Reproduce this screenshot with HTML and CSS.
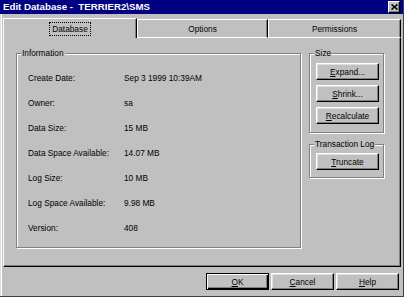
FILE: index.html
```html
<!DOCTYPE html>
<html>
<head>
<meta charset="utf-8">
<link rel="stylesheet" href="styles.css">
</head>
<body>
<div class="window">
  <div class="titlebar">
    <span class="title">Edit Database -  TERRIER2\SMS</span>
    <span class="close"><svg width="7" height="6" viewBox="0 0 7 6"><path d="M0.5 0.5 L6.5 5.5 M6.5 0.5 L0.5 5.5" stroke="#000" stroke-width="1.6" fill="none"/></svg></span>
  </div>
  <div class="main">
    <div class="tabs">
      <div class="tab tab1 active"><span class="focus">Database</span></div>
      <div class="tab tab2">Options</div>
      <div class="tab tab3">Permissions</div>
    </div>
    <div class="panel">
      <fieldset class="group info">
        <legend>Information</legend>
        <div class="grid">
          <span>Create Date:</span><span>Sep 3 1999 10:39AM</span>
          <span>Owner:</span><span>sa</span>
          <span>Data Size:</span><span>15 MB</span>
          <span>Data Space Available:</span><span>14.07 MB</span>
          <span>Log Size:</span><span>10 MB</span>
          <span>Log Space Available:</span><span>9.98 MB</span>
          <span>Version:</span><span>408</span>
        </div>
      </fieldset>
      <div class="side">
        <fieldset class="group size">
          <legend>Size</legend>
          <div class="btns">
            <button class="btn"><span><u>E</u>xpand...</span></button>
            <button class="btn"><span><u>S</u>hrink...</span></button>
            <button class="btn"><span><u>R</u>ecalculate</span></button>
          </div>
        </fieldset>
        <fieldset class="group tlog">
          <legend>Transaction Log</legend>
          <div class="btns tl">
            <button class="btn"><span><u>T</u>runcate</span></button>
          </div>
        </fieldset>
      </div>
    </div>
    <div class="footer">
      <button class="btn default"><span><u>O</u>K</span></button>
      <button class="btn"><span><u>C</u>ancel</span></button>
      <button class="btn"><span><u>H</u>elp</span></button>
    </div>
  </div>
</div>
</body>
</html>
```
FILE: styles.css
```css
* { box-sizing: border-box; }
html, body { margin: 0; padding: 0; background: #c0c0c0; }
body { font-family: "Liberation Sans", Arial, sans-serif; font-size: 8.3px; color: #000; }

.window {
  width: 404px; height: 297px; background: #c0c0c0;
  border-right: 1px solid #404040; border-bottom: 1px solid #404040;
  display: flex; flex-direction: column;
}
.titlebar {
  height: 14px; flex: none; background: #000080; color: #fff;
  display: flex; align-items: center; justify-content: space-between;
  padding: 0 3px 0 3px;
}
.title { font-weight: bold; font-size: 9.7px; white-space: pre; line-height: 14px; }
.close {
  width: 12px; height: 12px; background: #c0c0c0;
  border: 1px solid; border-color: #fff #000 #000 #fff;
  box-shadow: inset -1px -1px #808080;
  display: flex; align-items: center; justify-content: center;
}
.close svg { display: block; }

.main {
  flex: 1; display: flex; flex-direction: column; padding-top: 4px;
  box-shadow: inset 1px 0 #dfdfdf, inset 2px 0 #fff;
}
.tabs { display: flex; margin-left: 3px; height: 20px; align-items: flex-end; flex: none; }
.tab {
  height: 19px; line-height: 10px;
  border-top: 1px solid #fff; border-left: 1px solid #fff;
  border-right: 1px solid #000; border-bottom: 1px solid #fff;
  box-shadow: inset -1px 0 #808080;
  display: flex; align-items: center; justify-content: center;
}
.tab.active { height: 20px; border-bottom: none; }
.tab1 { width: 134px; }
.tab2 { width: 131px; }
.tab3 { width: 133px; }
.focus { border: 1px dotted #000; padding: 1px 2px; }

.panel {
  flex: none; margin-left: 3px; width: 398px; height: 229px;
  border-left: 1px solid #fff; border-right: 1px solid #000; border-bottom: 1px solid #000;
  box-shadow: inset -1px -1px #808080;
  display: flex; align-items: flex-start; gap: 8px;
  padding: 10px 0 0 12px;
}
.group {
  margin: 0; padding: 0; min-width: 0;
  border: 1px solid #808080;
  box-shadow: 1px 1px 0 #fff, inset 1px 1px 0 #fff;
}
.group legend {
  margin-left: 4px; padding: 0 1px; line-height: 10px; background: #c0c0c0;
}
.info { width: 285px; height: 200px; }
.grid {
  display: grid; grid-template-columns: 96px auto; grid-auto-rows: 25px;
  align-items: center; padding: 7px 0 0 11px; line-height: 10px;
}
.side { display: flex; flex-direction: column; gap: 6px; }
.size { width: 75px; height: 85px; }
.tlog { width: 75px; height: 39px; }
.btns { display: flex; flex-direction: column; gap: 5px; padding: 5px 0 0 6px; }
.btns.tl { padding-top: 4px; }

.btn {
  width: 63px; height: 17px; margin: 0; padding: 0;
  font: inherit; color: #000; line-height: 10px; background: #c0c0c0;
  border: 1px solid; border-color: #fff #000 #000 #fff;
  box-shadow: inset -1px -1px #808080, inset 1px 1px #dfdfdf;
  display: flex; align-items: center; justify-content: center;
}
.btn.default {
  border-color: #000;
  box-shadow: inset 1px 1px #fff, inset -1px -1px #000, inset -2px -2px #808080;
}
.footer { display: flex; justify-content: flex-end; gap: 2px; padding: 6px 4px 0 0; }
```
